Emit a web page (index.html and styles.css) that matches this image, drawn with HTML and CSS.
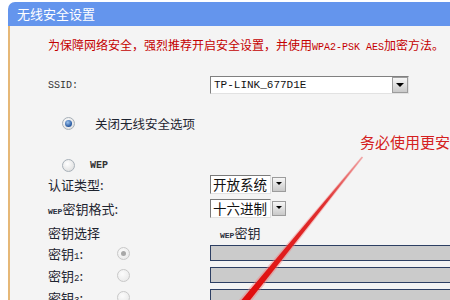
FILE: index.html
```html
<!DOCTYPE html>
<html lang="zh-CN">
<head>
    <meta charset="UTF-8">
    <meta name="viewport" content="width=device-width, initial-scale=1.0">
    <title>无线安全设置</title>
    <link rel="stylesheet" href="styles.css">
</head>
<body>

    <div class="panel">
        <div class="panel-head">无线安全设置</div>

        <div class="panel-body">
            <p class="notice">为保障网络安全，强烈推荐开启安全设置，并使用<span class="mono">WPA2-PSK AES</span>加密方法。</p>

            <div class="row row-ssid">
                <span class="label mono">SSID:</span>
                <div class="select select-wide">
                    <span class="select-text mono">TP-LINK_677D1E</span>
                    <span class="select-btn"></span>
                </div>
            </div>

            <div class="row row-off">
                <span class="radio radio-on"></span>
                <span class="opt-text">关闭无线安全选项</span>
            </div>

            <div class="row row-wep">
                <span class="radio"></span>
                <span class="opt-text opt-wep">WEP</span>
            </div>

            <div class="row row-auth">
                <span class="label">认证类型:</span>
                <div class="select-small">
                    <span class="select-box">开放系统</span>
                    <span class="select-btn"></span>
                </div>
            </div>

            <div class="row row-fmt">
                <span class="label"><span class="tiny">WEP</span>密钥格式:</span>
                <div class="select-small">
                    <span class="select-box">十六进制</span>
                    <span class="select-btn"></span>
                </div>
            </div>

            <div class="row row-keyhead">
                <span class="label">密钥选择</span>
                <span class="col-head"><span class="tiny">WEP</span>密钥</span>
            </div>

            <div class="row row-key row-key1">
                <span class="key-label">密钥<span class="digit">1</span>:</span>
                <span class="radio radio-dim radio-dim-on"></span>
                <span class="key-box"></span>
            </div>
            <div class="row row-key">
                <span class="key-label">密钥<span class="digit">2</span>:</span>
                <span class="radio radio-dim"></span>
                <span class="key-box"></span>
            </div>
            <div class="row row-key">
                <span class="key-label">密钥<span class="digit">3</span>:</span>
                <span class="radio radio-dim"></span>
                <span class="key-box"></span>
            </div>
        </div>
    </div>

    <!-- annotation drawn over the screenshot -->
    <div class="note">务必使用更安全的加密方式</div>
    <svg class="arrow" width="450" height="300" viewBox="0 0 450 300">
        <defs>
            <linearGradient id="arrowFill" x1="0" y1="0" x2="0" y2="1">
                <stop offset="0" stop-color="#f0a0a0"/>
                <stop offset="0.3" stop-color="#e03030"/>
                <stop offset="1" stop-color="#e00808"/>
            </linearGradient>
        </defs>
        <polygon points="361.6,156.4 363.2,157.6 246.0,308.4 237.6,301.6" fill="#f08080" opacity="0.45"/>
        <polygon points="362.0,156.7 362.8,157.3 244.5,307.2 239.1,302.8" fill="url(#arrowFill)"/>
    </svg>

</body>
</html>
```

FILE: styles.css
```css
* {
    margin: 0;
    padding: 0;
    box-sizing: border-box;
}

body {
    width: 450px;
    height: 300px;
    overflow: hidden;
    position: relative;
    background: #fff;
    font-family: "Noto Sans CJK SC", sans-serif;
    font-size: 12px;
    color: #222;
}

.mono {
    font-family: "Liberation Mono", monospace;
}

.panel {
    margin: 2px 0 0 8px;
    width: 460px;
}

.panel-head {
    height: 24px;
    line-height: 24px;
    padding-left: 9px;
    background: #6495ed;
    border-top-left-radius: 7px;
    color: #fff;
    font-size: 13px;
}

.panel-body {
    height: 290px;
    padding: 9px 0 0 38px;
    background: #f4f4f4;
    border-left: 2px solid #e6b877;
}

.notice {
    height: 20px;
    line-height: 20px;
    color: #c40000;
    font-size: 12px;
    white-space: nowrap;
}

.notice .mono {
    font-size: 10px;
}

.row {
    display: flex;
    align-items: center;
    height: 18px;
    white-space: nowrap;
}

.label {
    width: 162px;
    flex-shrink: 0;
    font-size: 13px;
    color: #1e2430;
}

.label.mono {
    font-size: 10px;
    color: #333;
}

.tiny {
    font-family: "Liberation Mono", monospace;
    font-size: 8px;
    font-weight: bold;
    color: #2a3040;
}

.row-ssid { margin-top: 21px; }
.row-off { margin-top: 19px; height: 20px; }
.row-wep { margin-top: 23px; }
.row-auth { margin-top: 1px; }
.row-fmt { margin-top: 6px; }
.row-keyhead { margin-top: 6px; }
.row-key { margin-top: 4px; }
.row-key1 { margin-top: 3px; }

/* fake select boxes */
.select {
    display: flex;
    align-items: center;
    justify-content: space-between;
    height: 18px;
    background: #fff;
    border: 1px solid;
    border-color: #808080 #e2e2e2 #e2e2e2 #808080;
}

.select-wide {
    width: 199px;
}

.select-text {
    padding-left: 3px;
    line-height: 16px;
    font-size: 11px;
    color: #111;
}

.select-small {
    display: flex;
    align-items: center;
    gap: 1px;
}

.select-box {
    width: 61px;
    height: 19px;
    padding-left: 2px;
    line-height: 17px;
    font-size: 13.5px;
    color: #111;
    background: #fff;
    border: 1px solid;
    border-color: #7a7a7a #e2e2e2 #e2e2e2 #7a7a7a;
    overflow: hidden;
}

.select-btn {
    position: relative;
    flex-shrink: 0;
    width: 16px;
    height: 16px;
    border: 1px solid #9c9c9c;
    background: linear-gradient(#f6f6f6, #c9c9c9);
}

.select-small .select-btn {
    width: 14px;
    height: 15px;
}

.select-btn::after {
    content: "";
    position: absolute;
    left: 50%;
    top: 50%;
    margin: -2px 0 0 -4px;
    border-left: 4px solid transparent;
    border-right: 4px solid transparent;
    border-top: 4px solid #000;
}

.select-small .select-btn::after {
    margin-left: -3px;
    border-left-width: 3px;
    border-right-width: 3px;
    border-top-width: 3px;
}

/* radios */
.radio {
    position: relative;
    flex-shrink: 0;
    width: 13px;
    height: 13px;
    border-radius: 50%;
    border: 1px solid #a7b0b8;
    background: radial-gradient(circle at 40% 35%, #fff, #d8d8d8);
}

.row-off .radio,
.row-wep .radio {
    margin-left: 14px;
}

.radio-on::after {
    content: "";
    position: absolute;
    inset: 2px;
    border-radius: 50%;
    background: radial-gradient(circle at 40% 35%, #9cc3ee, #22549c 70%);
}

.radio-dim {
    border-color: #c8c8c8;
    background: radial-gradient(circle at 40% 35%, #fbfbfb, #e6e6e6);
}

.radio-dim-on::after {
    content: "";
    position: absolute;
    inset: 3px;
    border-radius: 50%;
    background: #a8a8a8;
}

.opt-text {
    margin-left: 20px;
    font-size: 12.5px;
    color: #1e2430;
}

.opt-wep {
    margin-left: 15px;
    font-family: "Liberation Mono", monospace;
    font-size: 10px;
    font-weight: bold;
    color: #333;
}

.col-head {
    margin-left: 10px;
    font-size: 13px;
    color: #1e2430;
}

.key-label {
    width: 69px;
    flex-shrink: 0;
    font-size: 13px;
    color: #1e2430;
}

.digit {
    font-family: "Liberation Mono", monospace;
    font-size: 9px;
}

.key-box {
    margin-left: 80px;
    width: 260px;
    height: 16px;
    flex-shrink: 0;
    background: #cbcbcb;
    border: 1px solid #2d3f63;
}

/* overlay annotation */
.note {
    position: absolute;
    left: 360px;
    top: 132px;
    font-size: 15px;
    line-height: 20px;
    color: #d42020;
    white-space: nowrap;
}

.arrow {
    position: absolute;
    left: 0;
    top: 0;
    pointer-events: none;
}
```
